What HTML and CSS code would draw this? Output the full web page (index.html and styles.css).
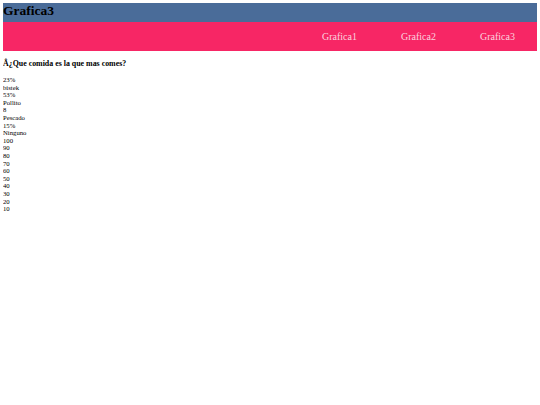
FILE: index.html
```html
<!DOCTYPE html>
<html lang="es">
<head>
    <meta charset="UTF-8">
    <meta name="viewport" content="width=device-width, initial-scale=1.0">
    <title>Grafica3</title>
    <link rel="stylesheet" href="styles.css">
</head>
<body>
    <header class="top-bar">
        <h1>Grafica3</h1>
    </header>
    <nav class="menu">
        <a href="#">Grafica1</a>
        <a href="#">Grafica2</a>
        <a href="#">Grafica3</a>
    </nav>

    <h4 class="question">Â¿Que comida es la que mas comes?</h4>

    <div class="chart">
        <div>23%</div>
        <div>bistek</div>
        <div>53%</div>
        <div>Pollito</div>
        <div>8</div>
        <div>Pescado</div>
        <div>15%</div>
        <div>Ninguno</div>
        <div>100</div>
        <div>90</div>
        <div>80</div>
        <div>70</div>
        <div>60</div>
        <div>50</div>
        <div>40</div>
        <div>30</div>
        <div>20</div>
        <div>10</div>
    </div>
</body>
</html>
```

FILE: styles.css
```css
body {
    font-family: "Liberation Serif", "Times New Roman", serif;
    font-size: 6.7px;
    line-height: 7.6px;
    margin: 3px;
    color: #000;
}

.top-bar {
    background-color: #4a6c99;
    height: 19px;
}

.top-bar h1 {
    margin: 0;
    font-size: 13.5px;
    line-height: 16px;
    font-weight: bold;
}

.menu {
    background-color: #f72665;
    height: 29px;
    display: flex;
    justify-content: flex-end;
    align-items: center;
}

.menu a {
    width: 79px;
    text-align: center;
    color: #fbd3df;
    text-decoration: none;
    font-size: 10px;
    line-height: 12px;
}

.question {
    margin: 8px 0 8px;
    font-size: 7.9px;
    line-height: 9px;
    font-weight: bold;
}
```
